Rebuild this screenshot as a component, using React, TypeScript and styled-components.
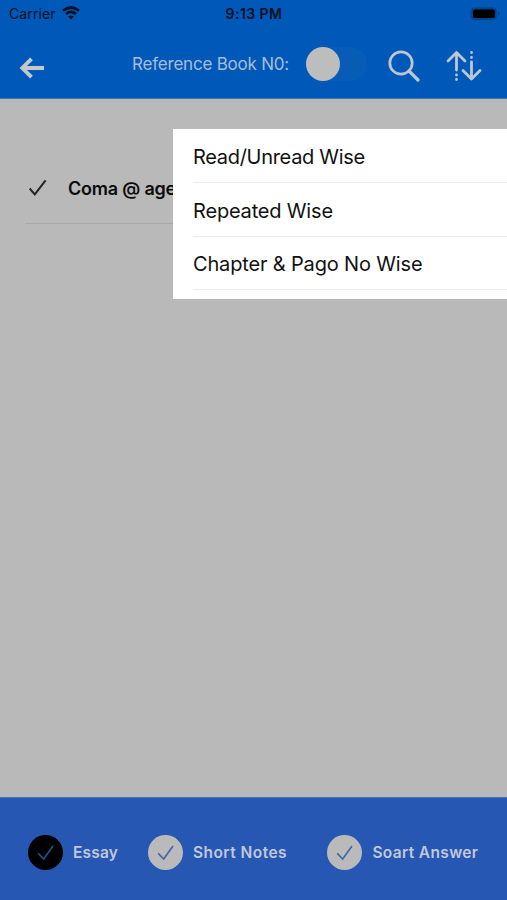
import React from "react";
import styled, { createGlobalStyle } from "styled-components";

const GlobalStyle = createGlobalStyle`
  * { box-sizing: border-box; }
  body { margin: 0; background: #b9b9b9; }
`;

const Screen = styled.div`
  position: relative;
  display: flex;
  flex-direction: column;
  width: 507px;
  height: 900px;
  overflow: hidden;
  background: #b9b9b9;
  font-family: Inter, "Liberation Sans", sans-serif;
  white-space: nowrap;
`;

const Header = styled.header`
  height: 99px;
  border-bottom: 1px solid #3a78bb;
  background: #0059b9;
`;

const StatusBar = styled.div`
  display: grid;
  grid-template-columns: 1fr auto 1fr;
  align-items: center;
  height: 28px;
  padding: 0 7px 0 9px;
  color: #031020;
`;

const Carrier = styled.div`
  display: flex;
  align-items: center;
  gap: 6px;
  height: 17px;
  margin-top: -2px;
  font-size: 14px;
  letter-spacing: 0.1px;
`;

const Clock = styled.div`
  margin: -2px 1px 0 0;
  font-size: 14px;
  font-weight: 600;
  letter-spacing: 0.45px;
`;

const Battery = styled.svg`
  justify-self: end;
  margin-top: -1px;
`;

const NavBar = styled.div`
  display: flex;
  align-items: center;
  height: 70px;
  padding: 4px 25px 0 19px;
`;

const BackIcon = styled.svg`
  margin: 5px 87px 0 0;
`;

const NavTitle = styled.div`
  width: 174px;
  margin-top: -3px;
  color: #a9bdd5;
  font-size: 17px;
  letter-spacing: -0.21px;
`;

const Toggle = styled.div`
  width: 61px;
  height: 34px;
  margin: -2px 21px 0 0;
  border-radius: 17px;
  background: #075cb5;
  &::before {
    content: "";
    display: block;
    width: 34px;
    height: 34px;
    border-radius: 50%;
    background: #bdbdbd;
  }
`;

const SearchIcon = styled.svg`
  margin: 1px 26px 0 0;
`;

const SortIcon = styled.svg`
  margin-top: 1px;
`;

const Content = styled.main`
  flex: 1;
  padding: 54px 0 0 25px;
`;

const BookRow = styled.div`
  display: flex;
  align-items: center;
  gap: 20px;
  height: 71px;
  padding-left: 3px;
  border-bottom: 1px solid #a8a8a8;
`;

const BookTitle = styled.div`
  color: #0b0b0b;
  font-size: 18px;
  font-weight: 600;
  letter-spacing: -0.2px;
`;

const Menu = styled.div`
  position: absolute;
  top: 129px;
  left: 173px;
  right: 0;
  height: 170px;
  padding-left: 20px;
  background: #fff;
`;

const MenuItem = styled.div<{ $tracking: number }>`
  display: flex;
  align-items: center;
  height: 53.8px;
  padding-top: 3px;
  border-bottom: 1px solid #ececec;
  color: #111;
  font-size: 20px;
  letter-spacing: ${(p) => p.$tracking}px;
`;

const Footer = styled.footer`
  display: flex;
  height: 103px;
  padding: 37px 0 0 28px;
  border-top: 1px solid #4f74b6;
  background: #2657b2;
`;

const Option = styled.div<{ $width: number }>`
  display: flex;
  gap: 10px;
  width: ${(p) => p.$width}px;
  height: 35px;
  align-items: center;
`;

const Badge = styled.span<{ $active?: boolean }>`
  display: grid;
  place-items: center;
  width: 35px;
  height: 35px;
  border-radius: 50%;
  background: ${(p) => (p.$active ? "#000" : "#bababa")};
  color: ${(p) => (p.$active ? "#24508a" : "#4268ab")};
`;

const OptionLabel = styled.span<{ $tracking: number }>`
  color: #c0c9da;
  font-size: 15.5px;
  font-weight: 600;
  letter-spacing: ${(p) => p.$tracking}px;
`;

const menuItems = [
  { label: "Read/Unread Wise", tracking: -0.3 },
  { label: "Repeated Wise", tracking: -0.18 },
  { label: "Chapter & Pago No Wise", tracking: -0.16 },
];

const options = [
  { label: "Essay", width: 120, tracking: 0.2, active: true },
  { label: "Short Notes", width: 179.4, tracking: 0.45 },
  { label: "Soart Answer", width: 165, tracking: 0.35 },
];

export default function App() {
  return (
    <>
      <GlobalStyle />
      <Screen>
        <Header>
          <StatusBar>
            <Carrier>
              Carrier
              <svg width="18" height="14" viewBox="0 0 18 14" fill="none" stroke="currentColor" strokeWidth="2.7">
                <path d="M1 4.8Q9-1.8 17 4.8" />
                <path d="M4 8Q9 3.9 14 8" />
                <path d="M6.2 10.6Q9 8.2 11.8 10.6L9 13.5Z" fill="currentColor" stroke="none" />
              </svg>
            </Carrier>
            <Clock>9:13 PM</Clock>
            <Battery width="30" height="14" viewBox="0 0 30 14">
              <rect x="1" y="0.7" width="25.5" height="12.2" rx="3.5" fill="#00438d" stroke="#074a92" />
              <rect x="3" y="2.5" width="21.8" height="8.6" rx="1.8" fill="#000" />
              <path d="M28 4.5Q31 6.8 28 9.3Z" fill="#07458a" />
            </Battery>
          </StatusBar>
          <NavBar>
            <BackIcon width="26" height="24" viewBox="0 0 26 24" fill="none" stroke="#c5c8c9" strokeWidth="3.8">
              <path d="M25 12H4M12.5 2.8L3.3 12L12.5 21.2" />
            </BackIcon>
            <NavTitle>Reference Book N0:</NavTitle>
            <Toggle />
            <SearchIcon width="32" height="32" viewBox="0 0 32 32" fill="none" stroke="#bdc6d2" strokeWidth="2.7" strokeLinecap="round">
              <circle cx="13" cy="13" r="11.2" />
              <path d="M21 21L30 30" strokeWidth="3.2" />
            </SearchIcon>
            <SortIcon width="36" height="32" viewBox="0 0 36 32" fill="none" stroke="#bdc6d2" strokeWidth="2.8" strokeLinecap="round" strokeLinejoin="round">
              <path d="M2 11L10.5 2.5L19 11M10.5 3V20" />
              <path d="M17 20.5L25.5 29L34 20.5M25.5 28V12" />
              <path d="M10.5 25V25.1M10.5 29.5V29.6M25.5 2.5V2.6M25.5 7.5V7.6" />
            </SortIcon>
          </NavBar>
        </Header>
        <Content>
          <BookRow>
            <svg width="20" height="18" viewBox="0 0 20 18" fill="none" stroke="#252525" strokeWidth="2">
              <path d="M1.7 9.5L6.8 15.4L17.6 1.4" />
            </svg>
            <BookTitle>Coma @ age</BookTitle>
          </BookRow>
        </Content>
        <Footer>
          {options.map((o) => (
            <Option key={o.label} $width={o.width}>
              <Badge $active={o.active}>
                <svg width="18" height="16" viewBox="0 0 18 16" fill="none" stroke="currentColor" strokeWidth="1.7">
                  <path d="M1.2 8.3L6.7 14L16 1" />
                </svg>
              </Badge>
              <OptionLabel $tracking={o.tracking}>{o.label}</OptionLabel>
            </Option>
          ))}
        </Footer>
        <Menu>
          {menuItems.map((m) => (
            <MenuItem key={m.label} $tracking={m.tracking}>{m.label}</MenuItem>
          ))}
        </Menu>
      </Screen>
    </>
  );
}
